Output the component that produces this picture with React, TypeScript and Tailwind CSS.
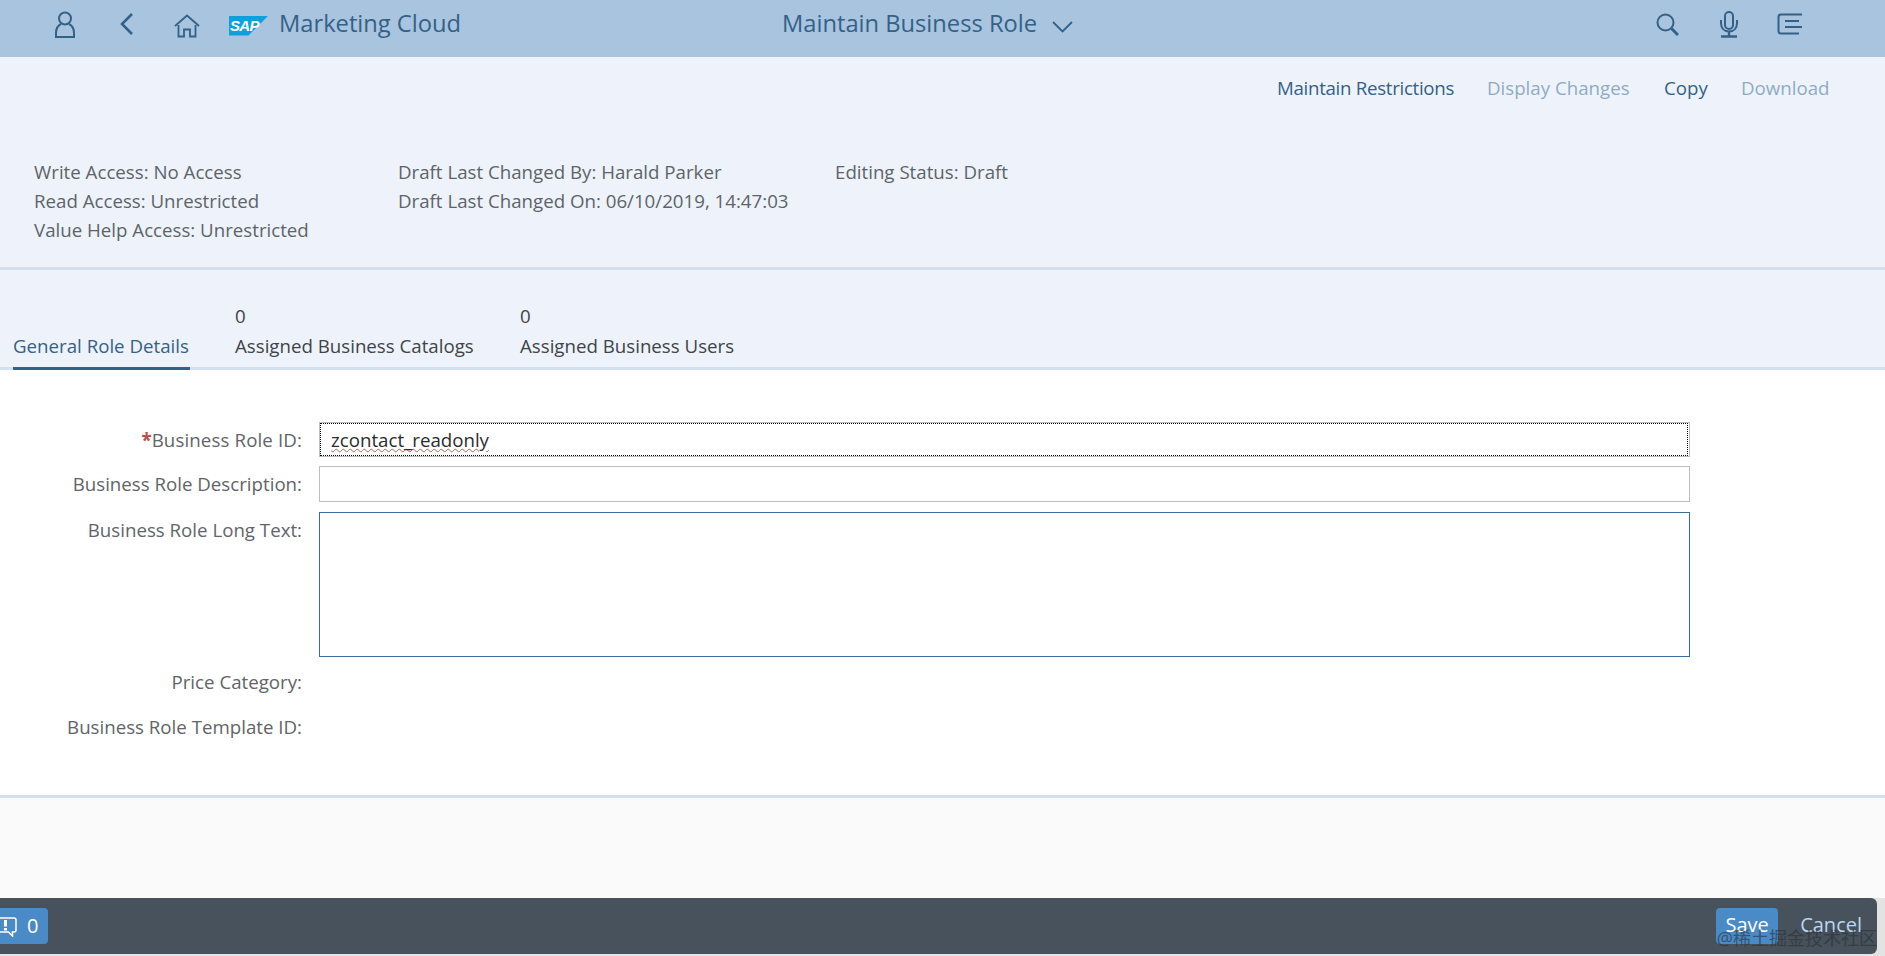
const font = { fontFamily: '"Open Sans", "Noto Sans CJK SC", sans-serif' };

function Header() {
  const s = { fill: "none", stroke: "#346187", strokeWidth: 2 } as const;
  return (
    <header className="h-[57px] bg-[#a9c4df] flex items-center text-[#346187] shrink-0">
      <svg className="ml-[54px] w-[22px] h-[28px] mb-[8px]" viewBox="0 0 22 28" {...s}>
        <circle cx="11" cy="7.5" r="6" />
        <path d="M7 13 C3 15 2 18 2 22 V26 H20 V22 C20 18 19 15 15 13" />
      </svg>
      <svg className="ml-[43px] w-[15px] h-[24px] mb-[10px]" viewBox="0 0 15 24" fill="none" stroke="#346187" strokeWidth="2.6">
        <path d="M13 2 L3 12 L13 22" />
      </svg>
      <svg className="ml-[40px] w-[26px] h-[24px] mb-[6px]" viewBox="0 0 26 24" fill="none" stroke="#346187" strokeWidth="1.8">
        <path d="M1 12 L13 1.5 L25 12" />
        <path d="M4.5 11 V22.5 H10 V15.5 H16 V22.5 H21.5 V11" />
      </svg>
      <svg className="ml-[29px] w-[40px] h-[20px] mb-[6px]" viewBox="0 0 40 20">
        <path d="M0 0 H39 L19.5 19.5 H0 Z" fill="#0e9fdf" />
        <text x="1" y="15" fontSize="15" fontWeight="700" fill="#fff" fontFamily="Liberation Sans" fontStyle="italic" letterSpacing="-0.7">SAP</text>
      </svg>
      <span className="ml-[10px] text-[23.7px] mb-[10px] w-[192px] whitespace-nowrap">Marketing Cloud</span>
      <span className="ml-[311px] text-[23.7px] mb-[10px] whitespace-nowrap w-[260px]">Maintain Business Role</span>
      <svg className="ml-[10px] mb-[4px] w-[21px] h-[12px]" viewBox="0 0 21 12" fill="none" stroke="#346187" strokeWidth="1.8">
        <path d="M1 1 L10.5 10.5 L20 1" />
      </svg>
      <svg className="ml-[583px] w-[23px] h-[23px] mb-[9px]" viewBox="0 0 23 23" {...s}>
        <circle cx="9.5" cy="9.5" r="8" />
        <path d="M15.5 15.5 L22 22" strokeWidth="3" />
      </svg>
      <svg className="ml-[40px] w-[20px] h-[27px] mb-[9px]" viewBox="0 0 20 27" {...s}>
        <rect x="6" y="1" width="8" height="17" rx="4" />
        <path d="M2 9 V12 C2 17 5 20.5 10 20.5 C15 20.5 18 17 18 12 V9" />
        <path d="M10 20.5 V25.5 M2 25.5 H18" strokeWidth="2.4" />
      </svg>
      <svg className="ml-[38px] w-[26px] h-[22px] mb-[9px]" viewBox="0 0 26 22" {...s}>
        <path d="M25 1.5 H4 Q1.5 1.5 1.5 4 V18 Q1.5 20.5 4 20.5 H22" />
        <path d="M8 8 H22 M8 14 H25" strokeWidth="2.2" />
      </svg>
    </header>
  );
}

function Summary() {
  return (
    <section className="h-[213px] bg-[#eef3fb] border-b-[3px] border-[#d3e1ef] shrink-0">
      <div className="flex justify-end pr-[57px] pt-[18px] h-[100px] text-[18.7px] leading-[26px]">
        <span className="text-[#346187] w-[179px] whitespace-nowrap tracking-[-0.3px]">Maintain Restrictions</span>
        <span className="text-[#8eabc5] w-[145px] ml-[31px] whitespace-nowrap">Display Changes</span>
        <span className="text-[#346187] w-[45px] ml-[32px] whitespace-nowrap">Copy</span>
        <span className="text-[#8eabc5] w-[87px] ml-[32px] whitespace-nowrap">Download</span>
      </div>
      <div className="flex pl-[34px] text-[18.7px] leading-[29px] text-[#5d6469]">
        <div className="w-[364px]">
          <p>Write Access: No Access</p>
          <p>Read Access: Unrestricted</p>
          <p>Value Help Access: Unrestricted</p>
        </div>
        <div className="w-[437px]">
          <p>Draft Last Changed By: Harald Parker</p>
          <p>Draft Last Changed On: 06/10/2019, 14:47:03</p>
        </div>
        <div>
          <p>Editing Status: Draft</p>
        </div>
      </div>
    </section>
  );
}

function Tabs() {
  return (
    <nav className="h-[100px] bg-[#eef3fb] border-b-[3px] border-[#d3e1ef] shrink-0 flex pl-[13px] text-[18.7px] leading-[30px]">
      <div className="w-[177px] h-[100px] pt-[61px] border-b-[3px] border-[#346187] text-[#346187] whitespace-nowrap">General Role Details</div>
      <div className="ml-[45px] w-[240px] pt-[31px] text-[#3f4448] whitespace-nowrap">
        <p>0</p>
        <p>Assigned Business Catalogs</p>
      </div>
      <div className="ml-[45px] pt-[31px] text-[#3f4448] whitespace-nowrap">
        <p>0</p>
        <p>Assigned Business Users</p>
      </div>
    </nav>
  );
}

function Label({ children, className = "" }: { children: React.ReactNode; className?: string }) {
  return <div className={`w-[302px] text-right text-[#5f6569] whitespace-nowrap ${className}`}>{children}</div>;
}

function Form() {
  return (
    <main className="h-[428px] bg-white border-b-[3px] border-[#d3e1ef] shrink-0 pt-[52px] text-[18.7px] leading-[26px]">
      <div className="flex items-center h-[35px]">
        <Label><span className="text-[#c04a4a] font-bold">*</span><span className="tracking-[0.12px]">Business Role ID:</span></Label>
        <div className="ml-[17px] w-[1371px] h-[35px] border border-[#bfbfbf] pr-px">
          <div className="h-full border border-dotted border-black pl-[10px] leading-[31px] text-[#2a2d30]">
            <span className="underline decoration-wavy decoration-[#e05050] decoration-1 underline-offset-1">zcontact_readonly</span>
          </div>
        </div>
      </div>
      <div className="flex items-center h-[36px] mt-[9px]">
        <Label>Business Role Description:</Label>
        <div className="ml-[17px] w-[1371px] h-[36px] border border-[#bfbfbf] bg-white" />
      </div>
      <div className="flex mt-[10px] h-[145px]">
        <Label className="pt-[5px]">Business Role Long Text:</Label>
        <div className="ml-[17px] w-[1371px] h-[145px] border border-[#3a6c9c] bg-white" />
      </div>
      <div className="flex items-center h-[26px] mt-[12px]">
        <Label>Price Category:</Label>
      </div>
      <div className="flex items-center h-[26px] mt-[19px]">
        <Label>Business Role Template ID:</Label>
      </div>
    </main>
  );
}

function Footer() {
  return (
    <footer className="relative h-[56px] bg-[#47525c] rounded-r-[6px] w-[1877px] shrink-0 flex items-center text-[20px]">
      <div className="w-[48px] h-[36px] bg-[#4a8ac6] rounded-r-[4px] flex items-center text-white">
        <svg className="w-[17px] h-[20px] mt-[2px]" viewBox="0 0 17 20" fill="none" stroke="#fff" strokeWidth="1.5">
          <path d="M-2 1 H14 Q16 1 16 3 V13 Q16 15 14 15 H12.5 V19 L8.5 15 H-2" />
          <path d="M5.5 3 V9.5 M5.5 11 V13.5" strokeWidth="3" />
        </svg>
        <span className="ml-[10px]">0</span>
      </div>
      <div className="ml-auto w-[62px] h-[36px] bg-[#4a8ac6] rounded-[4px] flex items-center justify-center text-white pb-[3px]">Save</div>
      <span className="ml-[22px] mr-[15px] mb-[3px] text-[#b9d6f2]">Cancel</span>
      <span className="absolute right-0 top-[29px] text-[18px] leading-[22px] text-[#2c3034] opacity-60 whitespace-nowrap">@稀土掘金技术社区</span>
    </footer>
  );
}

export default function App() {
  return (
    <div className="w-[1885px] h-[956px] overflow-hidden bg-[#e3e3e3] flex flex-col" style={font}>
      <Header />
      <Summary />
      <Tabs />
      <Form />
      <div className="h-[100px] bg-[#fafafa] shrink-0" />
      <Footer />
    </div>
  );
}
